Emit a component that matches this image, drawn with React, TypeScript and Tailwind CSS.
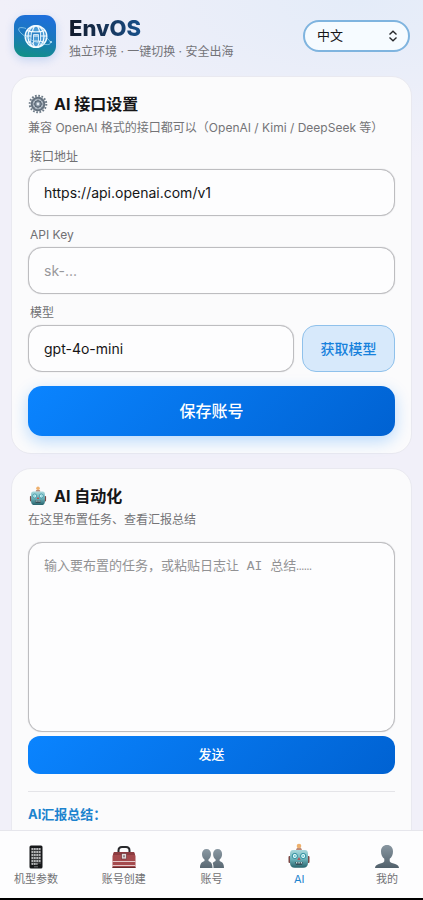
import React, { useState } from "react";

// ======= TYPE =======
interface NavItem {
  key: string;
  label: string;
  icon: React.ReactNode;
}

interface FieldProps {
  id: string;
  label: string;
  children: React.ReactNode;
}

// ======= ICONS =======
const LogoIcon = () => (
  <svg viewBox="0 0 42 42" className="size-[42px]" aria-hidden="true">
    <defs>
      <linearGradient id="logoBg" x1="0.6" y1="0" x2="0.4" y2="1">
        <stop offset="0" stopColor="#1e6fdc" />
        <stop offset="0.5" stopColor="#1a78bd" />
        <stop offset="1" stopColor="#128f88" />
      </linearGradient>
    </defs>
    <rect width="42" height="42" rx="11" fill="url(#logoBg)" />
    <circle cx="22" cy="21.500" r="10.800" fill="#4d9dd6" stroke="#f4fbff" strokeWidth="1.400" />
    <g fill="none" stroke="#f4fbff" strokeWidth="1.200">
      <ellipse cx="22" cy="21.500" rx="8" ry="10.800" />
      <ellipse cx="22" cy="21.500" rx="4" ry="10.800" />
      <path d="M13 15.500c5 2 13 2 18 0M11.500 21h21M13 27.500c5-2 13-2 18 0" />
    </g>
    <path d="M17.500 17h9v9h-2v-6.500h-5V28h-3z" fill="#2b82c6" stroke="#f4fbff" strokeWidth="0.800" />
    <path
      d="M12 13.500c-4-1.300-7-1.200-7.300.4-.5 2.600 5.300 7.600 13 11.200 8.400 4 17 5.700 18.400 3.600.9-1.400-.8-3.800-4.100-6.400"
      fill="none"
      stroke="#a9dcf2"
      strokeWidth="0.700"
    />
    <circle cx="37" cy="27" r="1" fill="#c9ecfa" />
  </svg>
);

const GearIcon = () => (
  <svg viewBox="0 0 20 20" className="size-5" aria-hidden="true">
    <circle cx="10" cy="10" r="8.300" fill="none" stroke="#6c7a87" strokeWidth="2" strokeDasharray="1.700 1.560" />
    <circle cx="10" cy="10" r="6.300" fill="#b3bdc7" stroke="#65727f" strokeWidth="2" />
    <path d="M10 4v12M4 10h12M5.800 5.800l8.400 8.400M14.200 5.800l-8.400 8.400" stroke="#7d8995" strokeWidth="0.800" />
    <circle cx="10" cy="10" r="3.300" fill="#8694a2" stroke="#4f5c69" strokeWidth="1" />
    <circle cx="10" cy="10" r="1.400" fill="#e3e9ee" />
  </svg>
);

const RobotIcon = ({ id, className }: { id: string; className: string }) => (
  <svg viewBox="0 0 24 26" className={className} aria-hidden="true">
    <defs>
      <linearGradient id={id} x1="0" y1="0" x2="0" y2="1">
        <stop offset="0" stopColor="#a9d8dc" />
        <stop offset="0.550" stopColor="#67adb5" />
        <stop offset="1" stopColor="#27626b" />
      </linearGradient>
    </defs>
    <rect x="1.500" y="13" width="3.500" height="7" rx="1" fill="#7c4845" />
    <rect x="19" y="13" width="3.500" height="7" rx="1" fill="#7c4845" />
    <path d="M9 7.500c0-2 1.200-3 3-3s3 1 3 3z" fill="#b98a7b" />
    <circle cx="12" cy="3" r="2.300" fill="#eeb06d" />
    <path d="M6 7h12c2 0 3 1.500 3 4v9c0 3.200-1.700 4.800-4.800 4.800H7.800C4.700 24.800 3 23.200 3 20v-9c0-2.500 1-4 3-4z" fill={`url(#${id})`} />
    <circle cx="7.800" cy="13" r="2.600" fill="#dff8fa" stroke="#298b9b" strokeWidth="1" />
    <circle cx="16.200" cy="13" r="2.600" fill="#dff8fa" stroke="#298b9b" strokeWidth="1" />
    <circle cx="7.800" cy="13" r="1" fill="#70c8d2" />
    <circle cx="16.200" cy="13" r="1" fill="#70c8d2" />
    <path d="M12 14l1.700 3h-3.400z" fill="#b45355" />
    <path d="M8 19h8l-1 3H9z" fill="#35515a" />
    <path d="M9 19v1.500h1.300V19M11.400 19v1.500h1.300V19M13.800 19v1.500h1.300V19" fill="#c3d8da" />
  </svg>
);

const PhoneIcon = () => (
  <svg viewBox="0 0 24 26" className="h-[26px] w-6" aria-hidden="true">
    <rect x="5.500" y="2.500" width="13" height="23" rx="1.500" fill="#17181a" />
    <rect x="7" y="5" width="10" height="16" fill="#3a3b3d" />
    <path
      d="M7.500 6h9M7.500 9h9M7.500 12h9M7.500 15h9M7.500 18h9M7.500 21h6"
      stroke="#dedfe0"
      strokeWidth="1.700"
      strokeDasharray="1.800 0.600"
    />
    <path d="M10 23.800h4" stroke="#8a8c8f" strokeWidth="0.800" />
  </svg>
);

const ToolboxIcon = () => (
  <svg viewBox="0 0 26 26" className="size-[26px]" aria-hidden="true">
    <path d="M7.500 10V7.500C7.500 5 8.500 4 11 4h4c2.500 0 3.500 1 3.500 3.500V10" fill="none" stroke="#292a2d" strokeWidth="2" />
    <path d="M3 9h20l1.500 4v12h-23V13z" fill="#a54a4d" />
    <path d="M3 9h20l1 3H2z" fill="#8c3c40" />
    <path d="M1.500 18.500h23M1.500 22.500h23" stroke="#e4c9ca" strokeWidth="1" />
    <path d="M1.500 24.500h23" stroke="#65292c" strokeWidth="1" />
    <rect x="10.500" y="10.500" width="5" height="5.500" fill="#dedada" stroke="#72363a" strokeWidth="0.700" />
    <path d="M12 12.300h2v2h-2z" fill="#9c8587" />
  </svg>
);

const PeopleIcon = () => (
  <svg viewBox="0 0 26 26" className="size-[26px]" aria-hidden="true">
    <defs>
      <linearGradient id="peopleFill" x1="0" y1="0" x2="0" y2="1">
        <stop offset="0" stopColor="#8a98a2" />
        <stop offset="1" stopColor="#596873" />
      </linearGradient>
    </defs>
    <g fill="url(#peopleFill)">
      <path d="M7.500 6C4.700 6 3 8 3 11c0 2.300.9 4.400 2.500 5.400v1.500C2.500 19 1 20.500 1 25h12.500c0-4.500-1.300-6-4-7.100v-1.500C11 15.400 12 13.300 12 11c0-3-1.700-5-4.500-5z" />
      <path d="M18.700 6c-2.800 0-4.600 2-4.600 5 0 2.300.9 4.400 2.500 5.400v1.500c-1.500.5-2.400 1.200-2.900 2.200.5 1.100.8 2.700.8 4.900H25c0-4.500-1.500-6-4.400-7.100v-1.500c1.600-1 2.500-3.100 2.500-5.400 0-3-1.700-5-4.400-5z" />
    </g>
  </svg>
);

const PersonIcon = () => (
  <svg viewBox="0 0 26 26" className="size-[26px]" aria-hidden="true">
    <defs>
      <linearGradient id="personFill" x1="0" y1="0" x2="0" y2="1">
        <stop offset="0" stopColor="#8997a1" />
        <stop offset="1" stopColor="#51606b" />
      </linearGradient>
    </defs>
    <path
      d="M13 2C9.300 2 7 4.600 7 8.500c0 3 1.200 5.800 3.300 7.200v2.500C9.800 19.800 7 20 4.200 21.200 2 22.100 1.200 23.200 1 25h24c-.2-1.800-1-2.900-3.200-3.800-2.800-1.200-5.600-1.400-6.100-3v-2.500C17.800 14.300 19 11.500 19 8.500 19 4.600 16.700 2 13 2z"
      fill="url(#personFill)"
    />
  </svg>
);

const NAV_ITEMS: NavItem[] = [
  { key: "device", label: "机型参数", icon: <PhoneIcon /> },
  { key: "create", label: "账号创建", icon: <ToolboxIcon /> },
  { key: "account", label: "账号", icon: <PeopleIcon /> },
  { key: "ai", label: "AI", icon: <RobotIcon id="robotNav" className="h-[26px] w-6" /> },
  { key: "me", label: "我的", icon: <PersonIcon /> },
];

const INPUT_CLASS =
  "h-[47px] w-full min-w-0 rounded-[14px] border border-[#bdbdc0] bg-[#fdfdfe] px-[15px] text-sm text-[#151517] shadow-[0_0_1px_#bdbdc0] outline-none placeholder:text-[#98989b] focus:border-[#0a84ff]";

const Field: React.FC<FieldProps> = ({ id, label, children }) => (
  <div>
    <label htmlFor={id} className="block px-0.5 pt-1.5 pb-0.5 text-xs leading-5 text-[#707073]">
      {label}
    </label>
    {children}
  </div>
);

// ======= COMPONENT =======
const App: React.FC = () => {
  const [lang, setLang] = useState("zh");
  const [baseUrl, setBaseUrl] = useState("https://api.openai.com/v1");
  const [apiKey, setApiKey] = useState("");
  const [model, setModel] = useState("gpt-4o-mini");
  const [prompt, setPrompt] = useState("");
  const [activeTab, setActiveTab] = useState("ai");

  return (
    <div className="flex h-screen flex-col border-b-2 border-black bg-[#f1f0f9] bg-[radial-gradient(ellipse_360px_160px_at_85%_0%,#e4ecf9,transparent)] font-[Inter,'Noto_Sans_CJK_SC',sans-serif] text-[#151517]">
      <main className="min-h-0 flex-1 overflow-y-auto px-[11px] [scrollbar-width:none]">
        {/* Header */}
        <header className="flex h-[76px] items-center justify-between pr-0.5 pb-1 pl-[3px]">
          <div className="flex items-center gap-[13px]">
            <div className="rounded-xl shadow-[0_3px_10px_rgba(30,110,220,0.22)]">
              <LogoIcon />
            </div>
            <div className="pt-1">
              <h1 className="w-fit bg-linear-to-r from-[#111a2b] to-[#17508a] bg-clip-text text-[22px] leading-7 font-extrabold text-transparent">
                EnvOS
              </h1>
              <p className="text-xs leading-5 text-[#737378]">独立环境 · 一键切换 · 安全出海</p>
            </div>
          </div>
          <div className="relative">
            <select
              aria-label="语言"
              value={lang}
              onChange={(e) => setLang(e.target.value)}
              className="h-8 w-[107px] appearance-none rounded-full border-2 border-[#7fb4df] bg-[#f6fbff] pl-3 text-[13px] text-[#151517] outline-none"
            >
              <option value="zh">中文</option>
              <option value="en">English</option>
            </select>
            <svg
              viewBox="0 0 10 12"
              className="pointer-events-none absolute top-2.5 right-3 h-3 w-2.5"
              fill="none"
              stroke="#26282b"
              strokeWidth="1.400"
              aria-hidden="true"
            >
              <path d="M1.500 4.500L5 1.300l3.500 3.200M1.500 7.500L5 10.700l3.500-3.200" />
            </svg>
          </div>
        </header>

        {/* AI 接口设置 */}
        <section className="rounded-[20px] border border-[#e9e9f0] bg-[#fbfbfc] px-4 pt-[15px] pb-[17px]">
          <h2 className="flex items-center gap-1.5 text-base leading-6 font-bold">
            <GearIcon />
            AI 接口设置
          </h2>
          <p className="text-xs leading-6 whitespace-nowrap text-[#747477]">
            兼容 OpenAI 格式的接口都可以（OpenAI / Kimi / DeepSeek 等）
          </p>

          <div className="flex flex-col gap-[3px] pt-px">
            <Field id="base-url" label="接口地址">
              <input
                id="base-url"
                type="text"
                value={baseUrl}
                onChange={(e) => setBaseUrl(e.target.value)}
                className={INPUT_CLASS}
              />
            </Field>
            <Field id="api-key" label="API Key">
              <input
                id="api-key"
                type="password"
                placeholder="sk-..."
                value={apiKey}
                onChange={(e) => setApiKey(e.target.value)}
                className={INPUT_CLASS}
              />
            </Field>
            <Field id="model" label="模型">
              <div className="flex gap-2">
                <input
                  id="model"
                  type="text"
                  value={model}
                  onChange={(e) => setModel(e.target.value)}
                  className={INPUT_CLASS}
                />
                <button
                  type="button"
                  className="h-[47px] w-[93px] shrink-0 rounded-[14px] border border-[#8fc1eb] bg-[#d7e9fb] text-sm font-medium text-[#1681dc]"
                >
                  获取模型
                </button>
              </div>
            </Field>
          </div>

          <button
            type="button"
            className="mt-3.5 h-[50px] w-full rounded-[14px] bg-linear-[135deg] from-[#0a84ff] to-[#0062d2] text-base font-medium text-white shadow-[0_5px_16px_rgba(10,132,255,0.28)]"
          >
            保存账号
          </button>
        </section>

        {/* AI 自动化 */}
        <section className="mt-3.5 rounded-[20px] border border-[#e9e9f0] bg-[#fbfbfc] px-4 pt-[15px] pb-8">
          <h2 className="flex items-center gap-1.5 text-base leading-6 font-bold">
            <RobotIcon id="robotTitle" className="size-5" />
            AI 自动化
          </h2>
          <p className="text-xs leading-6 text-[#747477]">在这里布置任务、查看汇报总结</p>
          <textarea
            aria-label="任务内容"
            placeholder="输入要布置的任务，或粘贴日志让 AI 总结……"
            value={prompt}
            onChange={(e) => setPrompt(e.target.value)}
            className="mt-2.5 block h-[190px] w-full resize-none rounded-[14px] border border-[#bdbdc0] bg-[#fdfdfe] px-[15px] py-3.5 font-['Liberation_Mono','Noto_Sans_CJK_SC',monospace] text-[13px] leading-5 shadow-[0_0_1px_#bdbdc0] outline-none placeholder:text-[#929294] focus:border-[#0a84ff]"
          />
          <button
            type="button"
            className="mt-1 h-[38px] w-full rounded-xl bg-linear-[135deg] from-[#0a84ff] to-[#0062d2] text-[13px] font-medium text-white"
          >
            发送
          </button>
          <div className="mt-[17px] border-t border-[#e4e4e8] pt-3">
            <h3 className="text-[13px] leading-5 font-bold text-[#1c83ce]">AI汇报总结：</h3>
          </div>
        </section>
      </main>

      {/* Bottom nav */}
      <nav className="flex h-[68px] shrink-0 justify-between border-t border-[#e6e6ec] bg-[#fdfdfe] px-3 pt-3">
        {NAV_ITEMS.map((item) => (
          <button
            key={item.key}
            type="button"
            onClick={() => setActiveTab(item.key)}
            className={`flex w-12 flex-col items-center text-[11px] leading-5 whitespace-nowrap ${
              activeTab === item.key ? "text-[#1c83ce]" : "text-[#717174]"
            }`}
          >
            {item.icon}
            <span>{item.label}</span>
          </button>
        ))}
      </nav>
    </div>
  );
};

export default App;
